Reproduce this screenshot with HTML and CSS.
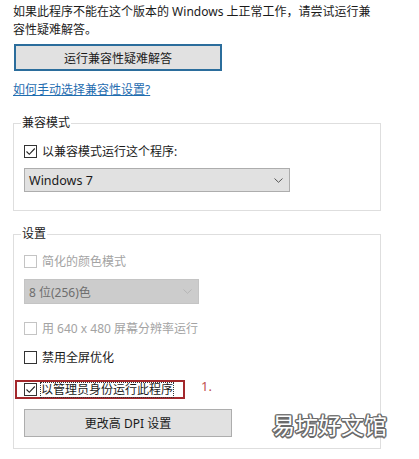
FILE: index.html
```html
<!DOCTYPE html>
<html lang="zh-CN">
<head>
    <meta charset="UTF-8">
    <meta name="viewport" content="width=device-width, initial-scale=1.0">
    <title>兼容性</title>
    <link rel="stylesheet" href="styles.css">
</head>
<body>
    <p class="intro">如果此程序不能在这个版本的 Windows 上正常工作，请尝试运行兼<br>容性疑难解答。</p>

    <button class="btn btn-focus">运行兼容性疑难解答</button>

    <a class="help-link" href="#">如何手动选择兼容性设置?</a>

    <fieldset class="group group-compat">
        <legend>兼容模式</legend>
        <div class="row row-first">
            <span class="check checked">
                <svg width="11" height="11" viewBox="0 0 11 11"><path d="M1.5 5.5 L4.3 8.3 L9.8 2.5" fill="none" stroke="#222" stroke-width="1.1"/></svg>
            </span>
            <span>以兼容模式运行这个程序:</span>
        </div>
        <div class="select select-wide">
            <span>Windows 7</span>
            <svg width="9" height="5" viewBox="0 0 9 5"><path d="M0.5 0.5 L4.5 4.3 L8.5 0.5" fill="none" stroke="#555" stroke-width="1"/></svg>
        </div>
    </fieldset>

    <fieldset class="group group-settings">
        <legend>设置</legend>
        <div class="row row-first disabled">
            <span class="check"></span>
            <span>简化的颜色模式</span>
        </div>
        <div class="select select-narrow disabled">
            <span>8 位(256)色</span>
            <svg width="9" height="5" viewBox="0 0 9 5"><path d="M0.5 0.5 L4.5 4.3 L8.5 0.5" fill="none" stroke="#b5b5b5" stroke-width="1"/></svg>
        </div>
        <div class="row row-res disabled">
            <span class="check"></span>
            <span>用 640 x 480 屏幕分辨率运行</span>
        </div>
        <div class="row row-fullscreen">
            <span class="check"></span>
            <span>禁用全屏优化</span>
        </div>
        <div class="admin-line">
            <div class="admin-row">
                <span class="check checked">
                    <svg width="11" height="11" viewBox="0 0 11 11"><path d="M1.5 5.5 L4.3 8.3 L9.8 2.5" fill="none" stroke="#222" stroke-width="1.1"/></svg>
                </span>
                <span class="focus-text">以管理员身份运行此程序</span>
            </div>
            <span class="step">1.</span>
        </div>
        <button class="btn btn-dpi">更改高 DPI 设置</button>
    </fieldset>

    <div class="watermark">易坊好文馆</div>
</body>
</html>
```

FILE: styles.css
```css
body {
    margin: 0;
    padding: 3px 13px 0 13px;
    font-family: "Noto Sans", "Noto Sans CJK SC", sans-serif;
    font-size: 12px;
    color: #1a1a1a;
    background: #fff;
    position: relative;
    height: 456px;
}

.intro {
    margin: 0;
    line-height: 18px;
}

.btn {
    display: block;
    font-family: inherit;
    font-size: 12px;
    color: #1a1a1a;
    background: #e1e1e1;
    border: 1px solid #adadad;
    padding: 0;
    cursor: pointer;
}

.btn-focus {
    margin: 5px 0 0 1px;
    width: 208px;
    height: 27px;
    border: 2px solid #2b6d9c;
}

.help-link {
    display: block;
    width: max-content;
    margin-top: 10px;
    line-height: 18px;
    color: #1f6db0;
    text-decoration: underline;
}

.group {
    margin: 0;
    padding: 0 10px;
    width: 368px;
    box-sizing: border-box;
    min-width: 0;
    border: 1px solid #dedede;
}

.group legend {
    margin-left: -3px;
    padding: 0 1px;
    line-height: 18px;
}

.group-compat {
    margin-top: 15px;
    padding-bottom: 18px;
}

.group-settings {
    margin-top: 14px;
    padding-bottom: 11px;
}

.row {
    display: flex;
    align-items: center;
    gap: 5px;
    height: 18px;
}

.row-first {
    margin-top: 10px;
}

.group-settings .row-first {
    margin-top: 9px;
}

.row-res {
    margin-top: 15px;
}

.row-fullscreen {
    margin-top: 11px;
}

.check {
    display: block;
    width: 11px;
    height: 11px;
    border: 1px solid #333;
    background: #fff;
}

.check svg {
    display: block;
}

.disabled {
    color: #a3a3a3;
}

.disabled .check {
    border-color: #c4c4c4;
}

.select {
    display: flex;
    align-items: center;
    justify-content: space-between;
    box-sizing: border-box;
    padding: 0 6px 0 4px;
    background: #e1e1e1;
    border: 1px solid #adadad;
}

.select-wide {
    margin-top: 8px;
    width: 266px;
    height: 24px;
    font-size: 12.5px;
}

.select-narrow {
    margin-top: 9px;
    width: 175px;
    height: 25px;
    background: #cccccc;
    border-color: #c4c4c4;
    color: #6e6e6e;
}

.admin-line {
    display: flex;
    align-items: flex-start;
    margin-top: 14px;
}

.admin-row {
    display: flex;
    align-items: center;
    gap: 4px;
    margin-left: -9px;
    height: 15px;
    padding: 0 10px 0 7px;
    border: 2px solid #a3282c;
}

.focus-text {
    line-height: 14px;
    outline: 1px dotted #333;
}

.step {
    margin: -3px 0 0 16px;
    font-size: 13px;
    color: #c0504d;
}

.btn-dpi {
    margin-top: 10px;
    width: 208px;
    height: 28px;
}

.watermark {
    position: absolute;
    left: 272px;
    top: 410px;
    font-size: 23px;
    line-height: 30px;
    color: #fff;
    text-shadow: 1.5px 0 #6b6b6b, -1.5px 0 #6b6b6b, 0 1.5px #6b6b6b, 0 -1.5px #6b6b6b,
        1px 1px #6b6b6b, -1px -1px #6b6b6b, 1px -1px #6b6b6b, -1px 1px #6b6b6b;
}
```
